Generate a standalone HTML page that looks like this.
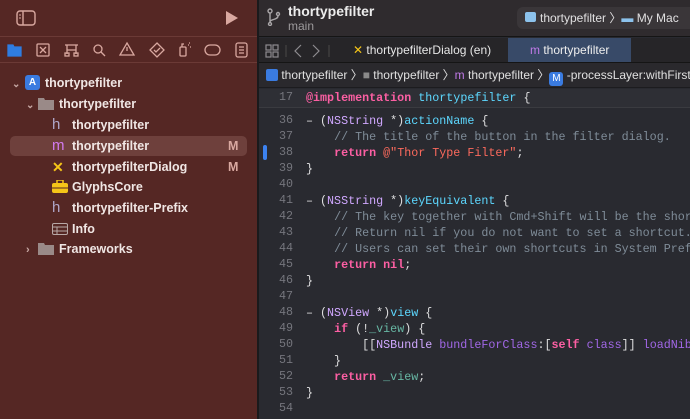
<!DOCTYPE html><html><head><meta charset="utf-8"><style>
*{margin:0;padding:0;box-sizing:border-box}
body{width:690px;height:419px;overflow:hidden;background:#292a30;font-family:"Liberation Sans",sans-serif;position:relative}
.side{position:absolute;left:0;top:0;width:258px;height:419px;background:#552724;color:#f0e6e4}
.sd{position:absolute;left:0;width:258px;height:1px;background:#6b3a36}
.row{position:absolute;height:20px;font-size:12.5px;font-weight:bold;line-height:20px;white-space:nowrap}
.ic{position:absolute;top:0;font-size:13px}
.vsep{position:absolute;left:257px;top:0;width:2px;height:419px;background:#1a1a1c}
.main{position:absolute;left:259px;top:0;right:0;bottom:0}
.code{position:absolute;left:0;font-family:"Liberation Mono",monospace;font-size:11.7px;color:#dfdfe0;white-space:pre;line-height:16px}
.ln{position:absolute;width:34px;text-align:right;color:#75767d;font-family:"Liberation Mono",monospace;font-size:11.7px}
.k{color:#fc5fa3;font-weight:bold}.c{color:#7f8c98}.s{color:#fc6a5d}.t{color:#d0a8ff}.f{color:#67b7a4}.m{color:#a167e6}.p{color:#5dd8ff}
</style></head><body>
<div class="side">
 <svg style="position:absolute;left:16px;top:10px" width="20" height="16"><rect x="1" y="1" width="18" height="14" rx="3" fill="none" stroke="#d9a8a0" stroke-width="1.4"/><line x1="7" y1="1" x2="7" y2="15" stroke="#d9a8a0" stroke-width="1.4"/><line x1="3" y1="5" x2="5" y2="5" stroke="#d9a8a0"/><line x1="3" y1="8" x2="5" y2="8" stroke="#d9a8a0"/></svg>
 <svg style="position:absolute;left:225px;top:10px" width="14" height="16"><path d="M1 1 L13 8 L1 15Z" fill="#d9a8a0"/></svg>
 <div class="sd" style="top:36px"></div>
 <svg style="position:absolute;left:0;top:38px" width="258" height="24" fill="none" stroke="#d9a8a0" stroke-width="1.3">
  <path d="M8 7h5l1 2h7v9H8z" fill="#2f7de1" stroke="#2f7de1"/>
  <rect x="37" y="6" width="12" height="12" rx="1"/><path d="M40 9l6 6M46 9l-6 6"/>
  <path d="M65 7h13M67 7v5h9v-5M67 12v4M76 12v4"/><rect x="65" y="15" width="4" height="3"/><rect x="74" y="15" width="4" height="3"/>
  <circle cx="98" cy="11" r="4"/><path d="M101 14l4 4"/>
  <path d="M127 5l7 12h-14z"/><path d="M127 9v4"/>
  <path d="M157 5l7 7-7 7-7-7z"/><path d="M154 12l2 2 4-4"/>
  <rect x="180" y="9" width="6" height="9" rx="1"/><path d="M182 9v-3h2M188 7h1M190 9h1M189 5h1"/>
  <rect x="205" y="7" width="15" height="10" rx="5"/>
  <rect x="236" y="5" width="11" height="14" rx="2"/><path d="M239 9h5M239 12h5M239 15h5"/>
 </svg>
 <div class="sd" style="top:62px"></div>
 <div style="position:absolute;left:10px;top:136px;width:237px;height:20px;border-radius:5px;background:#6e403c"></div>
 <div class="row" style="left:12px;top:73px"><span style="color:#c7a8a4;font-size:10px">⌄</span><span style="position:absolute;left:13px;top:2px;width:15px;height:15px;background:#3a7be0;border-radius:3px;color:#fff;font-size:10px;line-height:15px;text-align:center">A</span><span style="position:absolute;left:33px">thortypefilter</span></div>
 <div class="row" style="left:26px;top:94px"><span style="color:#c7a8a4;font-size:10px">⌄</span><svg style="position:absolute;left:12px;top:3px" width="16" height="13"><path d="M0 1h6l1 2h9v10H0z" fill="#9a8a88"/></svg><span style="position:absolute;left:33px">thortypefilter</span></div>
 <div class="row" style="left:52px;top:115px"><span style="color:#b0a6c8;font-weight:normal;font-size:15px">h</span><span style="position:absolute;left:20px">thortypefilter</span></div>
 <div class="row" style="left:52px;top:136px"><span style="color:#d27aef;font-weight:normal;font-size:15px">m</span><span style="position:absolute;left:20px">thortypefilter</span></div>
 <div class="row" style="left:52px;top:157px"><span style="color:#f5c518;font-size:14px">✕</span><span style="position:absolute;left:20px">thortypefilterDialog</span></div>
 <div class="row" style="left:52px;top:177px"><svg style="position:absolute;left:0;top:3px" width="16" height="13"><rect x="0" y="3" width="16" height="10" rx="2" fill="#f5c518"/><rect x="5" y="0" width="6" height="4" fill="none" stroke="#f5c518" stroke-width="1.5"/><line x1="0" y1="8" x2="16" y2="8" stroke="#552724"/></svg><span style="position:absolute;left:20px">GlyphsCore</span></div>
 <div class="row" style="left:52px;top:198px"><span style="color:#b0a6c8;font-weight:normal;font-size:15px">h</span><span style="position:absolute;left:20px">thortypefilter-Prefix</span></div>
 <div class="row" style="left:52px;top:219px"><svg style="position:absolute;left:0;top:4px" width="16" height="12" fill="none" stroke="#b8a8a6"><rect x="0.5" y="0.5" width="15" height="11" rx="1.5"/><path d="M0 4h16M0 8h16M5 4v8"/></svg><span style="position:absolute;left:20px">Info</span></div>
 <div class="row" style="left:26px;top:239px"><span style="color:#c7a8a4;font-size:11px">›</span><svg style="position:absolute;left:12px;top:3px" width="16" height="13"><path d="M0 1h6l1 2h9v10H0z" fill="#9a8a88"/></svg><span style="position:absolute;left:33px">Frameworks</span></div>
 <div class="row" style="left:228px;top:136px;color:#d9a8a0">M</div>
 <div class="row" style="left:228px;top:157px;color:#d9a8a0">M</div>
</div>
<div class="vsep"></div>
<div class="main">
 <div style="position:absolute;left:0;top:0;right:0;height:37px;background:#2f2b2e;border-bottom:1px solid #151515"></div>
 <svg style="position:absolute;left:8px;top:8px" width="14" height="18" fill="none" stroke="#a9a6a8" stroke-width="1.4"><circle cx="3" cy="3" r="2"/><circle cx="3" cy="16" r="1.5"/><circle cx="11" cy="6" r="1.5"/><path d="M3 5v9M11 8c0 4-8 3-8 6"/></svg>
 <div style="position:absolute;left:29px;top:3px;color:#ececec;font-weight:bold;font-size:14px">thortypefilter</div>
 <div style="position:absolute;left:29px;top:19px;color:#9d9a9c;font-size:12px">main</div>
 <div style="position:absolute;left:258px;top:7px;width:180px;height:22px;background:#3a3639;border-radius:6px;color:#e0dfe0;font-size:12px;line-height:22px;white-space:nowrap"><span style="display:inline-block;width:11px;height:10px;background:#8cc2ec;border-radius:2px;margin:0 4px 0 8px"></span>thortypefilter 〉<span style="color:#8cc2ec">▬</span> My Mac</div>
 <div style="position:absolute;left:0;top:38px;right:0;height:25px;background:#262528;border-bottom:1px solid #151515"></div>
 <svg style="position:absolute;left:6px;top:43px" width="70" height="16" fill="none" stroke="#8d8b8f" stroke-width="1.2"><rect x="1" y="2" width="5" height="5"/><rect x="8" y="2" width="5" height="5"/><rect x="1" y="9" width="5" height="5"/><rect x="8" y="9" width="5" height="5"/><path d="M21 2v12" stroke="#444"/><path d="M36 2l-6 6 6 6M48 2l6 6-6 6"/><path d="M64 2v12" stroke="#444"/></svg>
 <div style="position:absolute;left:94px;top:38px;font-size:12px;color:#e6e6e6;line-height:24px"><span style="color:#f5c518">✕</span> thortypefilterDialog (en)</div>
 <div style="position:absolute;left:249px;top:38px;width:123px;height:24px;background:#384a68;font-size:12px;color:#eee;line-height:24px;padding-left:22px"><span style="color:#c07ae8">m</span> thortypefilter</div>
 <div style="position:absolute;left:0;top:63px;right:0;height:25px;background:#2a292d;border-bottom:1px solid #1c1c1f;font-size:12px;color:#e0e0e0;line-height:24px;white-space:nowrap;padding-left:7px"><span style="display:inline-block;width:12px;height:12px;background:#3a7be0;border-radius:2px;vertical-align:-2px"></span> thortypefilter 〉<span style="color:#8a8a8a">■</span> thortypefilter 〉<span style="color:#c07ae8">m</span> thortypefilter 〉<span style="display:inline-block;width:14px;height:14px;background:#3a7be0;border-radius:3px;color:#fff;text-align:center;line-height:14px;font-size:10px;vertical-align:-2px">M</span> -processLayer:withFirstT</div>
 <div style="position:absolute;left:0;top:89px;right:0;height:19px;background:#2e2f35;border-bottom:1px solid #3a3b40"></div>
 <div style="position:absolute;left:4px;top:145px;width:4px;height:15px;background:#3c82f0;border-radius:2px"></div>
 <div class="ln" style="top:90px;left:0">17</div><div class="code" style="top:90px;left:47px"><span class="k">@implementation</span> <span class="p">thortypefilter</span> {</div>
 <div id="c" style="position:absolute;left:0;top:113px"></div>
</div>
<div style="position:absolute;left:259px;top:113px">
<div class="ln" style="top:0">36</div><div class="ln" style="top:16px">37</div><div class="ln" style="top:32px">38</div><div class="ln" style="top:48px">39</div><div class="ln" style="top:64px">40</div><div class="ln" style="top:80px">41</div><div class="ln" style="top:96px">42</div><div class="ln" style="top:112px">43</div><div class="ln" style="top:128px">44</div><div class="ln" style="top:144px">45</div><div class="ln" style="top:160px">46</div><div class="ln" style="top:176px">47</div><div class="ln" style="top:192px">48</div><div class="ln" style="top:208px">49</div><div class="ln" style="top:224px">50</div><div class="ln" style="top:240px">51</div><div class="ln" style="top:256px">52</div><div class="ln" style="top:272px">53</div><div class="ln" style="top:288px">54</div>
<div class="code" style="top:0;left:47px">– (<span class="t">NSString</span> *)<span class="p">actionName</span> {
    <span class="c">// The title of the button in the filter dialog.</span>
    <span class="k">return</span> <span class="s">@"Thor Type Filter"</span>;
}

– (<span class="t">NSString</span> *)<span class="p">keyEquivalent</span> {
    <span class="c">// The key together with Cmd+Shift will be the shortcut</span>
    <span class="c">// Return nil if you do not want to set a shortcut.</span>
    <span class="c">// Users can set their own shortcuts in System Prefs</span>
    <span class="k">return</span> <span class="k">nil</span>;
}

– (<span class="t">NSView</span> *)<span class="p">view</span> {
    <span class="k">if</span> (!<span class="f">_view</span>) {
        [[<span class="t">NSBundle</span> <span class="m">bundleForClass</span>:[<span class="k">self</span> <span class="m">class</span>]] <span class="m">loadNib</span>
    }
    <span class="k">return</span> <span class="f">_view</span>;
}
</div></div>
</body></html>
